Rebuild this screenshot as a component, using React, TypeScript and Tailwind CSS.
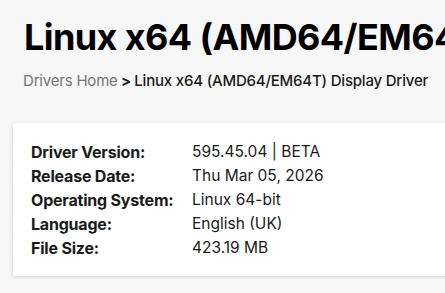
export default function App() {
  const rows: [string, string][] = [
    ["Driver Version:", "595.45.04 | BETA"],
    ["Release Date:", "Thu Mar 05, 2026"],
    ["Operating System:", "Linux 64-bit"],
    ["Language:", "English (UK)"],
    ["File Size:", "423.19 MB"],
  ];
  return (
    <div className="w-[445px] h-[293px] overflow-hidden bg-[#f7f7f7] text-[#1a1a1a]" style={{ fontFamily: "Inter, 'Noto Sans', sans-serif" }}>
      <div className="pl-[24px] pt-[15px] whitespace-nowrap">
        <h1 className="text-[36px] leading-[44px] font-bold text-black tracking-[-0.6px]">Linux x64 (AMD64/EM64T) Display Driver</h1>
      </div>
      <div className="pl-[23px] mt-[12px] text-[15px] leading-[20px] whitespace-nowrap tracking-[-0.2px]">
        <span className="text-[#757575]">Drivers Home</span>
        <span className="font-bold"> &gt; </span>
        <span className="font-medium">Linux x64 (AMD64/EM64T) Display Driver</span>
      </div>
      <div className="ml-[13px] mt-[32px] w-[500px] h-[153px] bg-white shadow-[0_1px_4px_rgba(0,0,0,0.15)] rounded-[2px] pt-[17px] pl-[18px]">
        {rows.map(([k, v]) => (
          <div key={k} className="flex text-[16px] leading-[24px]">
            <div className="w-[161px] font-bold tracking-[-0.2px]">{k}</div>
            <div className="text-[15.5px]">{v}</div>
          </div>
        ))}
      </div>
    </div>
  );
}
